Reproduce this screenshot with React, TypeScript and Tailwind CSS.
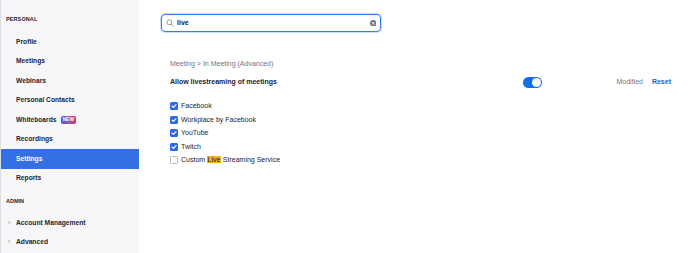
const personal = [
  "Profile",
  "Meetings",
  "Webinars",
  "Personal Contacts",
  "Whiteboards",
  "Recordings",
  "Settings",
  "Reports",
]

const admin = ["Account Management", "Advanced"]

const services = [
  { label: "Facebook", checked: true },
  { label: "Workplace by Facebook", checked: true },
  { label: "YouTube", checked: true },
  { label: "Twitch", checked: true },
  { label: "custom", checked: false },
]

function Checkbox({ checked }: { checked: boolean }) {
  if (!checked) {
    return <span className="h-[8px] w-[8px] rounded-[1.5px] border border-[#b5b5c0] bg-white" />
  }
  return (
    <span className="flex h-[8px] w-[8px] items-center justify-center rounded-[1.5px] bg-[#2d6be4]">
      <svg viewBox="0 0 8 8" className="h-[8px] w-[8px]">
        <path d="M2 4.1 L3.4 5.4 L6 2.7" fill="none" stroke="white" strokeWidth="1.2" strokeLinecap="round" strokeLinejoin="round" />
      </svg>
    </span>
  )
}

export default function App() {
  return (
    <div className="flex h-[253px] w-[690px] bg-white text-[#232333]" style={{ fontFamily: '"Liberation Sans", Arial, sans-serif' }}>
      {/* Sidebar */}
      <aside className="h-full w-[139px] border-l border-[#dcdce2] bg-[#f7f7fa]">
        <div className="pl-[5px] pt-[13.5px] text-[5.5px] font-bold leading-[10px] tracking-[0.1px]">PERSONAL</div>
        <ul className="mt-[8.5px]">
          {personal.map((item) => (
            <li
              key={item}
              className={
                "flex h-[19.5px] items-center pl-[15px] text-[6.7px] font-bold " +
                (item === "Settings" ? "bg-[#3370e3] text-white" : "")
              }
            >
              {item}
              {item === "Whiteboards" && (
                <span className="ml-[4px] flex h-[7.5px] items-center rounded-[2px] bg-gradient-to-r from-[#2b59e6] to-[#e3204f] px-[2px] text-[5px] font-bold leading-none text-white">
                  NEW
                </span>
              )}
            </li>
          ))}
        </ul>
        <div className="pl-[5px] pt-[8px] text-[5.5px] font-bold leading-[10px]">ADMIN</div>
        <ul className="mt-[7px]">
          {admin.map((item) => (
            <li key={item} className="flex h-[19.5px] items-center text-[6.7px] font-bold">
              <span className="w-[15px] pl-[7px] text-[7px] font-normal text-[#8a8a99]">›</span>
              {item}
            </li>
          ))}
        </ul>
      </aside>

      {/* Main */}
      <main className="flex-1 pl-[22px]">
        <div className="mt-[14px] flex h-[18px] w-[220px] items-center rounded-[4px] border-[1.5px] border-[#2d7ef0] px-[4px] shadow-[0_0_0_1px_#c9dcfb]">
          <svg viewBox="0 0 10 10" className="h-[8px] w-[8px]">
            <circle cx="4.2" cy="4.2" r="3.1" fill="none" stroke="#6e7680" strokeWidth="0.9" />
            <path d="M6.5 6.5 L9 9" stroke="#6e7680" strokeWidth="0.9" strokeLinecap="round" />
          </svg>
          <span className="ml-[3px] flex-1 text-[7px] font-bold">live</span>
          <svg viewBox="0 0 10 10" className="h-[6.5px] w-[6.5px]">
            <circle cx="5" cy="5" r="5" fill="#6e7680" />
            <path d="M3.2 3.2 L6.8 6.8 M6.8 3.2 L3.2 6.8" stroke="white" strokeWidth="1.2" strokeLinecap="round" />
          </svg>
        </div>

        <div className="pl-[9px]">
          <div className="mt-[27px] text-[7px] leading-[10px] text-[#747487]">Meeting &gt; In Meeting (Advanced)</div>

          <div className="mt-[8px] flex h-[10px] w-[501px] items-center">
            <div className="w-[353px] text-[7px] font-bold">Allow livestreaming of meetings</div>
            <span className="flex h-[11px] w-[19px] items-center justify-end rounded-full bg-[#0e6fec] pr-[1px]">
              <span className="h-[9px] w-[9px] rounded-full bg-white" />
            </span>
            <span className="ml-auto text-[7px] text-[#747487]">Modified</span>
            <span className="ml-[9px] text-[7px] font-bold text-[#2361d4]">Reset</span>
          </div>

          <ul className="mt-[12.5px]">
            {services.map((s) => (
              <li key={s.label} className="flex h-[13.5px] items-center gap-[3px] text-[7px]">
                <Checkbox checked={s.checked} />
                {s.label === "custom" ? (
                  <span>
                    Custom <span className="bg-[#f6ae2d] px-[0.5px]">Live</span> Streaming Service
                  </span>
                ) : (
                  <span>{s.label}</span>
                )}
              </li>
            ))}
          </ul>
        </div>
      </main>
    </div>
  )
}
